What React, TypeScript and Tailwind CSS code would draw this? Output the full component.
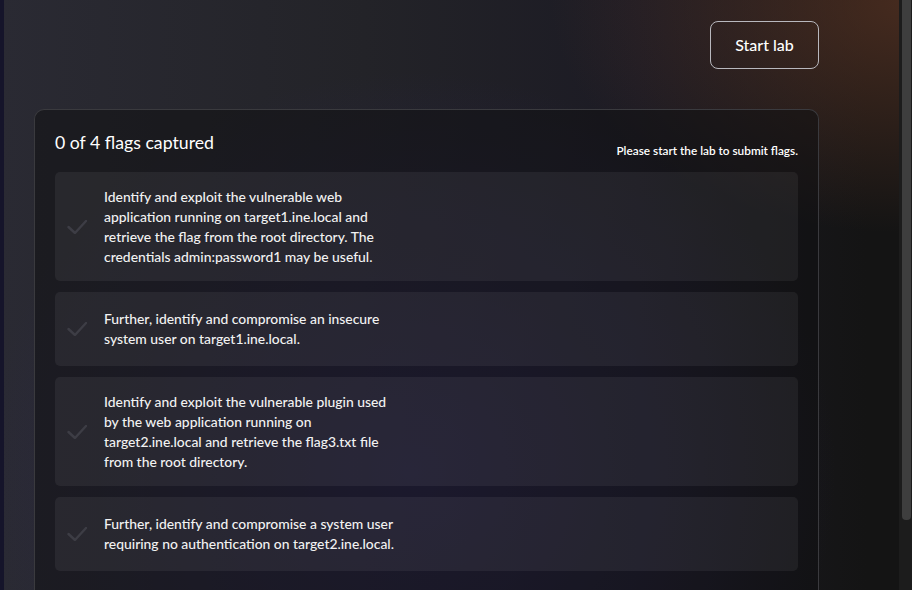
const flags = [
  "Identify and exploit the vulnerable web application running on target1.ine.local and retrieve the flag from the root directory. The credentials admin:password1 may be useful.",
  "Further, identify and compromise an insecure system user on target1.ine.local.",
  "Identify and exploit the vulnerable plugin used by the web application running on target2.ine.local and retrieve the flag3.txt file from the root directory.",
  "Further, identify and compromise a system user requiring no authentication on target2.ine.local.",
];

function CheckMark() {
  return (
    <svg width="20" height="14" viewBox="0 0 20 14" fill="none" className="shrink-0">
      <path
        d="M1.5 7 L8 13 L19 1"
        stroke="#3d3d45"
        strokeWidth="2.4"
        strokeLinecap="round"
        strokeLinejoin="round"
      />
    </svg>
  );
}

function FlagItem({ text }: { text: string }) {
  return (
    <div className="flex items-center min-h-[74px] py-[14.5px] pl-[12px] rounded-[5px] bg-white/[0.06]">
      <CheckMark />
      <p className="ml-[17px] w-[298px] text-[13.9px] leading-[20px] font-medium text-[#f2f2f2]">
        {text}
      </p>
    </div>
  );
}

export default function App() {
  return (
    <div
      className="flex h-[590px] w-[912px] overflow-hidden font-['Lato','Noto_Sans',sans-serif] text-white bg-[radial-gradient(ellipse_at_100%_0%,rgba(112,62,40,0.55),transparent_28%),radial-gradient(ellipse_at_45%_80%,rgba(46,38,105,0.6),transparent_60%),linear-gradient(90deg,#2a2a33_0%,#232328_40%,#1c1b24_70%,#141414_95%)]"
    >
      {/* sidebar edge */}
      <div className="w-[4px] shrink-0 bg-[#15142a]" />

      <main className="flex-1 pl-[30px] pt-[21px]">
        <div className="w-[785px]">
          <div className="flex justify-end">
            <button className="h-[48px] w-[109px] rounded-lg border border-[#b8b8be] text-[16px] font-medium text-white">
              Start lab
            </button>
          </div>

          <section className="mt-10 rounded-t-[10px] border border-b-0 border-[#3a3a3e] bg-[#111113]/55 px-5 pt-[21px] pb-6">
            <div className="flex items-start justify-between">
              <h2 className="text-[17.7px] leading-[24px] font-normal text-white">
                0 of 4 flags captured
              </h2>
              <p className="mt-[12px] text-[11.8px] leading-[16px] font-semibold text-white">
                Please start the lab to submit flags.
              </p>
            </div>

            <div className="mt-[13px] flex flex-col gap-[11px]">
              {flags.map((f) => (
                <FlagItem key={f} text={f} />
              ))}
            </div>
          </section>
        </div>
      </main>

      {/* scrollbar */}
      <div className="w-[13px] shrink-0 bg-[#1c1c1c] pl-[3px] pr-[1px]">
        <div className="h-[520px] rounded-b-[4px] bg-[#3e3e3e]" />
      </div>
    </div>
  );
}
